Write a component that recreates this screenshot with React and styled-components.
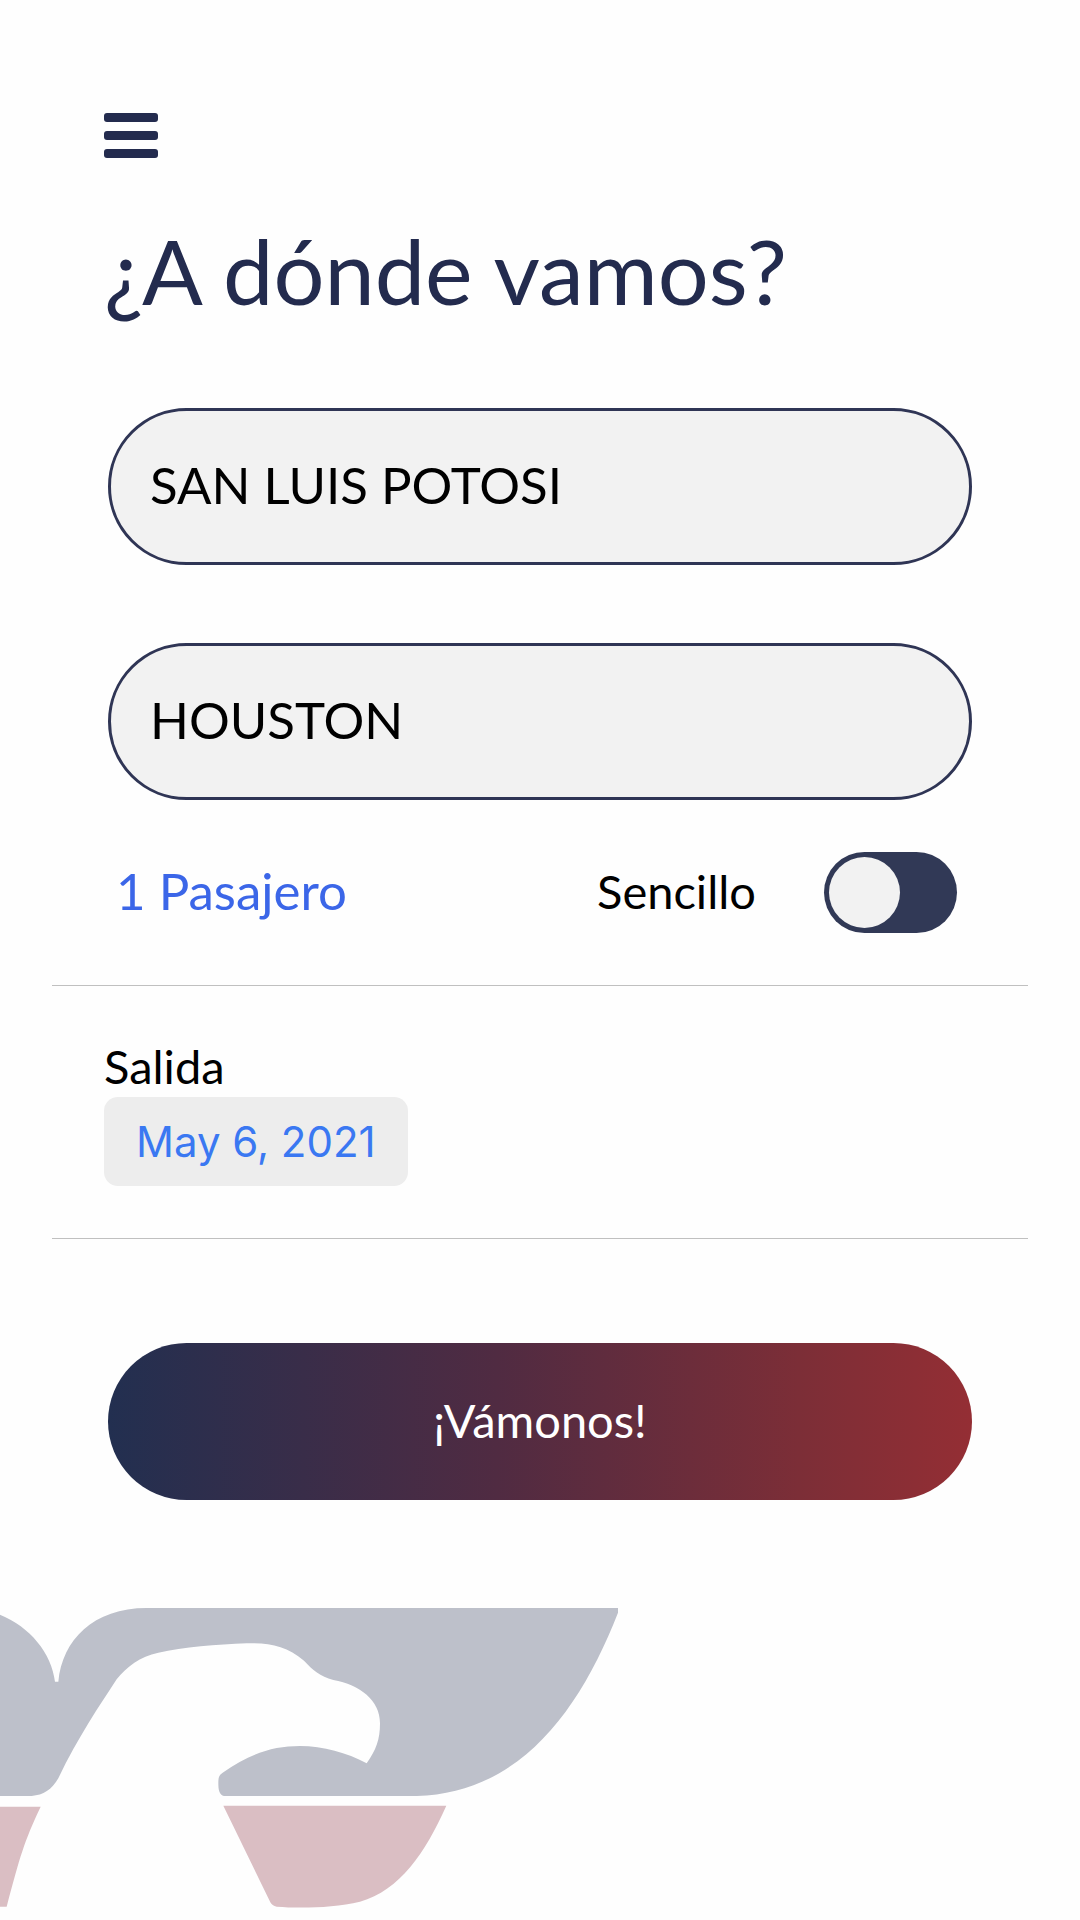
import React, { useState } from "react";
import styled, { createGlobalStyle } from "styled-components";

const GlobalStyle = createGlobalStyle`
  * {
    box-sizing: border-box;
  }

  body {
    margin: 0;
    background-color: #fefefe;
    font-family: Lato, sans-serif;
  }

  button,
  input {
    font-family: inherit;
  }
`;

const Page = styled.div`
  display: flex;
  flex-direction: column;
  min-height: 100vh;
  overflow-x: hidden;
`;

const Header = styled.header`
  padding: 113px 104px 0;
`;

const MenuButton = styled.button`
  display: flex;
  flex-direction: column;
  gap: 9px;
  padding: 0;
  border: none;
  background: none;
  cursor: pointer;
`;

const MenuBar = styled.span`
  width: 54px;
  height: 9px;
  border-radius: 3px;
  background-color: #232b4e;
`;

const Heading = styled.h1`
  margin: 62px 0 0;
  font-size: 90px;
  font-weight: 400;
  line-height: 100px;
  color: #232b4e;
`;

const Form = styled.form`
  display: flex;
  flex-direction: column;
`;

const Fields = styled.div`
  display: flex;
  flex-direction: column;
  gap: 78px;
  padding: 88px 108px 0;
`;

const Input = styled.input`
  width: 100%;
  height: 157px;
  padding: 0 39px 4px;
  border: 3px solid #2f3555;
  border-radius: 79px;
  background-color: #f2f2f2;
  font-size: 51px;
  color: #000;
`;

const Options = styled.div`
  display: flex;
  align-items: center;
  margin: 0 52px;
  padding: 52px 71px 52px 64px;
  border-bottom: 1px solid #c0c0c0;
`;

const PassengerButton = styled.button`
  margin-right: auto;
  padding: 0 0 4px;
  border: none;
  background: none;
  font-size: 51px;
  line-height: 60px;
  color: #3b66e8;
  cursor: pointer;
`;

const Label = styled.label`
  padding-bottom: 4px;
  font-size: 47px;
  line-height: 54px;
  color: #000;
`;

const Switch = styled.input`
  appearance: none;
  display: flex;
  align-items: center;
  width: 133px;
  height: 81px;
  margin: 0 0 0 68px;
  padding: 5px;
  border-radius: 41px;
  background-color: #313956;
  cursor: pointer;

  &::before {
    content: "";
    width: 71px;
    height: 71px;
    border-radius: 50%;
    background-color: #f2f2f2;
  }

  &:checked {
    justify-content: flex-end;
  }
`;

const Departure = styled.div`
  display: flex;
  flex-direction: column;
  align-items: flex-start;
  margin: 0 52px;
  padding: 53px 52px 52px;
  border-bottom: 1px solid #c0c0c0;
`;

const DateButton = styled.button`
  height: 89px;
  padding: 0 32px;
  border: none;
  border-radius: 14px;
  background-color: #ededed;
  && {
    font-family: Inter, sans-serif;
  }
  font-size: 42px;
  color: #3a78f2;
  cursor: pointer;
`;

const SubmitButton = styled.button`
  height: 157px;
  margin: 104px 108px 0;
  padding: 0 0 4px;
  border: none;
  border-radius: 79px;
  background: linear-gradient(90deg, #222f50, #502b42 45%, #7c2e37 80%, #942e34);
  font-size: 47px;
  color: #fff;
  cursor: pointer;
`;

const Eagle = styled.svg`
  display: block;
  flex: none;
  width: 620px;
  height: 304px;
  margin-top: 108px;
`;

const Logo = () => (
  <Eagle viewBox="0 54 1860 912" aria-hidden="true">
    <path
      fill="#bdc0ca"
      d="M0 74 C90 110 155 190 165 275 L175 275 C187 150 280 54 440 54 H1854 V68
        C1740 360 1560 610 1250 618 H672 C658 616 655 600 655 580
        C655 560 658 555 668 548 C750 490 820 468 900 468
        C970 468 1040 488 1100 520 C1128 480 1140 450 1140 400
        C1140 330 1080 285 1000 270 C960 258 938 240 912 212
        C860 168 810 158 740 160 C650 163 550 172 475 188
        C420 200 380 230 350 268 C300 345 235 440 175 565
        C155 600 130 615 95 618 H0 Z"
    />
    <path
      fill="#dabec3"
      d="M0 650 H122 C72 755 60 800 20 950 H0 Z
        M670 647 H1339 C1275 790 1200 900 1080 935
        C1000 954 900 955 830 950 Q816 947 811 937 Z"
    />
  </Eagle>
);

const App = () => {
  const [origin, setOrigin] = useState("SAN LUIS POTOSI");
  const [destination, setDestination] = useState("HOUSTON");
  const [roundTrip, setRoundTrip] = useState(false);

  const handleSubmit = (e) => {
    e.preventDefault();
  };

  return (
    <Page>
      <GlobalStyle />
      <Header>
        <MenuButton type="button" aria-label="Menú">
          <MenuBar />
          <MenuBar />
          <MenuBar />
        </MenuButton>
        <Heading>¿A dónde vamos?</Heading>
      </Header>
      <Form onSubmit={handleSubmit}>
        <Fields>
          <Input
            type="text"
            name="origin"
            aria-label="Origen"
            value={origin}
            onChange={(e) => setOrigin(e.target.value)}
          />
          <Input
            type="text"
            name="destination"
            aria-label="Destino"
            value={destination}
            onChange={(e) => setDestination(e.target.value)}
          />
        </Fields>
        <Options>
          <PassengerButton type="button">1 Pasajero</PassengerButton>
          <Label htmlFor="roundTrip">Sencillo</Label>
          <Switch
            type="checkbox"
            id="roundTrip"
            checked={roundTrip}
            onChange={(e) => setRoundTrip(e.target.checked)}
          />
        </Options>
        <Departure>
          <Label htmlFor="departure">Salida</Label>
          <DateButton type="button" id="departure">
            May 6, 2021
          </DateButton>
        </Departure>
        <SubmitButton type="submit">¡Vámonos!</SubmitButton>
      </Form>
      <Logo />
    </Page>
  );
};

export default App;
